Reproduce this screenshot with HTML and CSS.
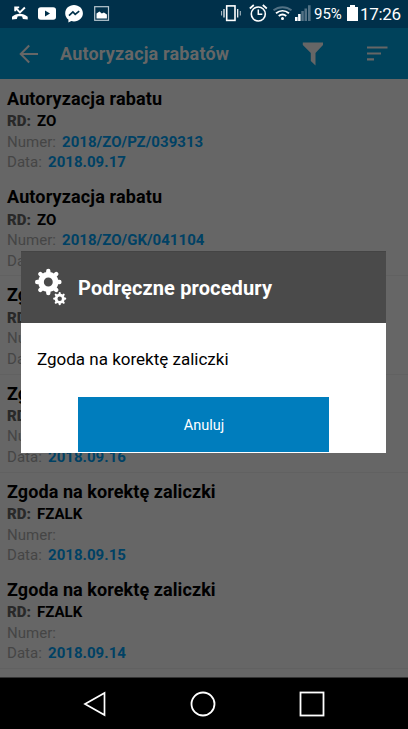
FILE: index.html
```html
<!DOCTYPE html>
<html lang="pl">
<head>
<meta charset="utf-8">
<title>Autoryzacja rabatów</title>
<link rel="stylesheet" href="styles.css">
</head>
<body>
<div class="phone">
  <header class="status">
    <svg class="status-left" width="120" height="28" viewBox="0 0 120 28">
      <path d="M12 19.400v-2.700c4.500-4 11.200-4 15.700 0v2.700l-4.800-.3-.8-2.500c-1.300-.5-3.200-.5-4.500 0l-.8 2.500z" fill="#fff"/>
      <path d="M15.300 7.500l4.600 5 5-5M15.200 11.300V7.400h4" fill="none" stroke="#fff" stroke-width="1.900"/>
      <rect x="38" y="7.200" width="18" height="12.600" rx="2.800" fill="#fff"/><path d="M45 10.400v6l5-3z" fill="#00304a"/>
      <path d="M74 5c-5 0-8.800 3.600-8.800 8.200 0 2.600 1.200 4.900 3.200 6.400v3l2.900-1.600c.9.200 1.800.4 2.700.4 5 0 8.900-3.600 8.900-8.200S79 5 74 5z" fill="#fff"/>
      <path d="M69 15.600l3.900-3.600 2.300 2.300 4-3.200" fill="none" stroke="#00304a" stroke-width="1.700"/>
      <rect x="94.700" y="6.700" width="13.800" height="13.600" fill="none" stroke="#b9c8d0" stroke-width="1.200"/>
      <path d="M96.500 18.400v-4.800l3-2 2.300 1.900 2.100-1 3 2.100v3.800z" fill="#fff"/>
    </svg>
    <svg class="status-mid" width="98" height="28" viewBox="217 0 98 28">
      <g fill="none" stroke="#fff">
        <rect x="226.700" y="5.900" width="8.300" height="14.500" stroke-width="1.600"/>
        <path d="M224 9v8.500M237.700 9v8.500" stroke-width="1.200"/><path d="M221.600 11v4.500M240.300 11v4.500" stroke-width="1" opacity=".7"/>
        <circle cx="258.300" cy="14" r="7" stroke-width="1.600"/>
        <path d="M258.300 9.500v4.800h4" stroke-width="1.500"/><path d="M249.800 8.500l4-3.500M266.800 8.500l-4-3.500" stroke-width="1.700"/>
        <path d="M273.500 10.300c5.300-4.200 12.700-4.200 18 0" stroke="#527184" stroke-width="2"/>
        <path d="M276 13.300c3.900-3.200 9.100-3.200 13 0M278.700 16c2.300-1.800 5.300-1.800 7.600 0" stroke-width="1.800"/>
      </g>
      <circle cx="282.500" cy="18.400" r="1.500" fill="#fff"/>
      <path d="M295 17h2.600v4H295zM298.100 14h2.500v7h-2.500z" fill="#fff"/>
      <path d="M301.300 11h2.500v10h-2.500zM304.500 8.500h2.500V21h-2.500zM308 5.300h2.600V21H308z" fill="#527184"/>
    </svg>
    <span class="percent">95%</span>
    <svg class="battery" width="11" height="16" viewBox="0 0 11 16"><path d="M3 0h5v2h3v14H0V2h3z" fill="#fff"/></svg>
    <span class="clock">17:26</span>
  </header>

  <div class="appbar">
    <svg class="back" width="20" height="20" viewBox="0 0 20 20"><path d="M19 10H2M10.200 1.500L1.700 10l8.500 8.500" fill="none" stroke="#666" stroke-width="2"/></svg>
    <h1 class="page-title">Autoryzacja rabatów</h1>
    <svg class="filter" width="22" height="24" viewBox="0 0 22 24"><path d="M.8.500H21V3l-7.500 8v12.500L8.800 19v-8L.8 3z" fill="#666"/></svg>
    <svg class="sort" width="21" height="15" viewBox="0 0 21 15"><path d="M0 1.500h20.500M0 7.500h14M0 13.300h7" stroke="#666" stroke-width="2.200"/></svg>
  </div>

  <main class="list">
    <article class="item plain"><h2>Autoryzacja rabatu</h2><p class="rd"><b>RD:</b><span>ZO</span></p><p class="meta num"><b>Numer:</b><span>2018/ZO/PZ/039313</span></p><p class="meta"><b>Data:</b><span>2018.09.17</span></p></article>
    <article class="item"><h2>Autoryzacja rabatu</h2><p class="rd"><b>RD:</b><span>ZO</span></p><p class="meta num"><b>Numer:</b><span>2018/ZO/GK/041104</span></p><p class="meta"><b>Data:</b><span>2018.09.17</span></p></article>
    <article class="item"><h2 class="long">Zgoda na korektę zaliczki</h2><p class="rd"><b>RD:</b><span>FZALK</span></p><p class="meta num"><b>Numer:</b></p><p class="meta"><b>Data:</b><span>2018.09.16</span></p></article>
    <article class="item"><h2 class="long">Zgoda na korektę zaliczki</h2><p class="rd"><b>RD:</b><span>FZALK</span></p><p class="meta num"><b>Numer:</b></p><p class="meta"><b>Data:</b><span>2018.09.16</span></p></article>
    <article class="item plain"><h2 class="long">Zgoda na korektę zaliczki</h2><p class="rd"><b>RD:</b><span>FZALK</span></p><p class="meta num"><b>Numer:</b></p><p class="meta"><b>Data:</b><span>2018.09.15</span></p></article>
    <article class="item"><h2 class="long">Zgoda na korektę zaliczki</h2><p class="rd"><b>RD:</b><span>FZALK</span></p><p class="meta num"><b>Numer:</b></p><p class="meta"><b>Data:</b><span>2018.09.14</span></p></article>
  </main>

  <nav class="navbar">
    <svg width="24" height="26" viewBox="0 0 24 26"><path d="M21.500 1.900v22.200L2 13z" fill="none" stroke="#fff" stroke-width="1.700"/></svg>
    <svg width="26" height="26" viewBox="0 0 26 26"><circle cx="13" cy="13" r="11.500" fill="none" stroke="#fff" stroke-width="1.800"/></svg>
    <svg width="26" height="26" viewBox="0 0 26 26"><rect x="1.500" y="1.500" width="23" height="23" fill="none" stroke="#fff" stroke-width="1.800"/></svg>
  </nav>

  <section class="dialog">
    <div class="dialog-head">
      <svg class="gears" width="34" height="40" viewBox="0 0 34 40">
        <defs>
          <g id="gear" fill="none" stroke="#fff">
            <circle r="7.700" stroke-width="6"/>
            <path d="M0-10.300V-11.700M0 10.300V11.700M10.300 0H11.700M-10.300 0H-11.700M7.300-7.300l1.100-1.100M-7.300 7.300l-1.100 1.100M7.300 7.300l1.100 1.100M-7.300-7.300l-1.100-1.100" stroke-width="4.600" stroke-linecap="round"/>
          </g>
        </defs>
        <use href="#gear" transform="translate(14.300 14) scale(.95)"/>
        <use href="#gear" transform="translate(25.700 30.700) scale(.47)"/>
      </svg>
      <h2 class="dialog-title">Podręczne procedury</h2>
    </div>
    <div class="dialog-body">
      <div class="option">Zgoda na korektę zaliczki</div>
      <button class="cancel">Anuluj</button>
    </div>
  </section>
</div>
</body>
</html>
```
FILE: styles.css
```css
* { box-sizing: border-box; }
body { margin: 0; background: #000; font-family: Roboto, sans-serif; }
h1, h2, p { margin: 0; }
svg { display: block; flex: none; }

.phone { position: relative; width: 408px; height: 729px; overflow: hidden; display: flex; flex-direction: column; }

.status { flex: none; height: 28px; background: #00304a; display: flex; color: #fff; }
.status-mid { margin-left: 97px; }
.percent { width: 32px; font-size: 15px; line-height: 28px; white-space: nowrap; margin-left: -1px; }
.battery { margin: 5px 0 0 1px; }
.clock { margin-left: 2px; font-size: 17px; line-height: 29px; white-space: nowrap; letter-spacing: -.35px; }

.appbar { flex: none; height: 51px; background: #00425b; display: flex; align-items: center; padding-left: 19px; color: #666; }
.page-title { width: 241px; margin-left: 21px; font-size: 18px; line-height: 24px; font-weight: 700; letter-spacing: .18px; white-space: nowrap; }
.filter { margin-left: 1px; }
.sort { margin-left: 43px; }

.list { flex: none; height: 599px; background: #666; overflow: hidden; padding-top: 1px; border-bottom: 1px solid #333; }
.item { height: 98.200px; padding: 7px 7px 0; border-bottom: 1px solid #616161; white-space: nowrap; }
.item.plain { border-color: transparent; }
.item h2 { font-size: 18px; line-height: 23px; margin-bottom: 1.400px; font-weight: 700; color: #000; letter-spacing: .14px; }
.item h2.long { letter-spacing: .08px; }
.item p { display: flex; font-size: 15px; line-height: 20.500px; }
.rd { font-weight: 700; color: #000; }
.rd b { width: 30px; color: #292929; }
.meta { color: #004164; font-weight: 700; letter-spacing: .04px; }
.meta b { width: 41px; font-weight: 400; color: #454545; }
.num b { width: 55px; }

.navbar { flex: none; height: 51px; background: #000; display: flex; align-items: center; gap: 83px; padding-left: 83px; }

.dialog { position: absolute; left: 21px; top: 251px; width: 365px; height: 202px; background: #fff; display: flex; flex-direction: column; }
.dialog-head { flex: none; height: 72px; background: #4a4a4a; border-top: 1px solid #444; display: flex; align-items: center; padding-left: 13px; }
.dialog-title { margin-left: 10px; color: #fff; font-size: 20px; line-height: 28px; font-weight: 700; letter-spacing: .13px; padding-top: 1px; white-space: nowrap; }
.dialog-body { display: flex; flex-direction: column; }
.option { height: 74px; padding-left: 16px; font-size: 17px; line-height: 73px; color: #000; white-space: nowrap; }
.cancel { width: 251px; height: 55px; margin-left: 57px; padding: 2px 0 0 1px; border: 0; background: #007dbd; color: #fff; font: 400 14.500px/53px Roboto, sans-serif; }
```
